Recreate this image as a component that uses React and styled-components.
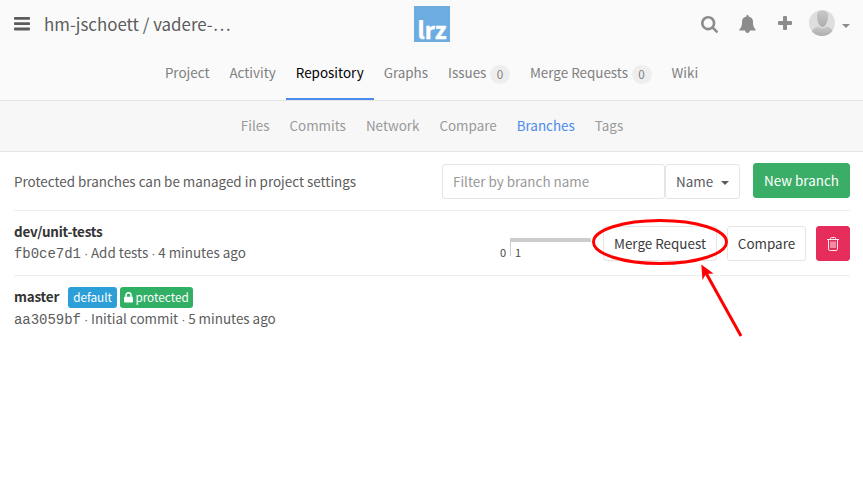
import React from "react";
import styled, { createGlobalStyle } from "styled-components";

const Global = createGlobalStyle`
  * { box-sizing: border-box; }
  body {
    margin: 0;
    background: #fff;
    color: #5c5c5c;
    font: 13.43px/20px "Noto Sans CJK SC", "Open Sans", sans-serif;
  }
`;

const Page = styled.div`
  position: relative;
  width: 863px;
  height: 482px;
  overflow: hidden;
`;

const TopArea = styled.div`
  height: 101px;
  background: #fafafa;
  border-bottom: 1px solid #e5e5e5;
`;

const Header = styled.header`
  display: grid;
  grid-template-columns: 1fr 36px 1fr;
  height: 48px;
  padding: 0 13px 0 14px;
`;

const Crumbs = styled.div`
  display: flex;
  align-items: center;
  gap: 14px;
`;

const Title = styled.h1`
  margin: 0;
  font-size: 16.9px;
  line-height: 24px;
  font-weight: 400;
  white-space: nowrap;
  color: #5c5c5c;
`;

const Logo = styled.div`
  width: 36px;
  height: 36px;
  margin-top: 6px;
  padding-top: 11px;
  background: #6dace0;
  color: #fff;
  text-align: center;
  font: 700 23px/24px "Noto Sans CJK SC", sans-serif;
  -webkit-text-stroke: 0.5px #fff;
`;

const Actions = styled.div`
  display: flex;
  align-items: center;
  justify-content: flex-end;
  svg { flex: none; }
  > svg:last-child { margin-top: 4px; }
`;

const SearchIcon = styled.svg`margin-right: 21px;`;
const BellIcon = styled.svg`margin-right: 22px;`;
const PlusIcon = styled.svg`margin: -2px 17px 0 0;`;
const Avatar = styled.svg`margin: -2px 7px 0 0;`;

const Nav = styled.nav`
  display: flex;
  justify-content: center;
  height: 52px;
`;

const NavItem = styled.a`
  display: flex;
  height: 52px;
  padding: 14px 10px 0;
  color: ${(p) => (p.$active ? "#000" : "#808080")};
  border-bottom: 2px solid ${(p) => (p.$active ? "#4a8bee" : "transparent")};
  white-space: nowrap;
`;

const Badge = styled.span`
  width: 20px;
  height: 19px;
  margin: 3px 0 0 3.5px;
  border-radius: 10px;
  background: #eee;
  color: #808080;
  font-size: 11.7px;
  line-height: 18px;
  text-align: center;
`;

const SubNav = styled.nav`
  display: flex;
  justify-content: center;
  gap: 20px;
  height: 51px;
  padding-top: 14px;
  padding-left: 1px;
  background: #f7f7f7;
  border-bottom: 1px solid #e5e5e5;
`;

const SubItem = styled.a`
  color: ${(p) => (p.$active ? "#4a8bee" : "#999")};
`;

const Content = styled.main`
  padding: 0 13px 0 14px;
`;

const Toolbar = styled.div`
  display: flex;
  align-items: flex-start;
  height: 59px;
  padding-top: 12px;
  border-bottom: 1px solid #eee;
`;

const Hint = styled.span`
  flex: 1;
  padding-top: 7px;
  white-space: nowrap;
`;

const Filter = styled.input`
  width: 223px;
  height: 35px;
  padding: 0 10px 2px;
  border: 1px solid #e5e5e5;
  border-radius: 3px;
  background: #fff;
  font: inherit;
  &::placeholder { color: #999; opacity: 1; }
`;

const SortButton = styled.button`
  display: flex;
  align-items: center;
  justify-content: space-between;
  width: 75px;
  height: 35px;
  padding: 0 10px 2px;
  border: 1px solid #e5e5e5;
  border-radius: 3px;
  background: #fff;
  color: #5c5c5c;
  font: inherit;
  svg { margin-top: 5px; }
`;

const NewButton = styled.button`
  width: 97px;
  height: 35px;
  margin: -1px 0 0 13px;
  padding: 0 0 2px;
  border: 1px solid #38ae67;
  border-radius: 3px;
  background: #3aad66;
  color: #fff;
  font: inherit;
`;

const Row = styled.section`
  display: flex;
  height: 65px;
  border-bottom: 1px solid ${(p) => (p.$last ? "transparent" : "#eee")};
`;

const Info = styled.div`
  flex: 1;
  padding-top: 11px;
  white-space: nowrap;
`;

const NameLine = styled.div`
  display: flex;
  height: 21px;
`;

const BranchName = styled.strong`
  margin-top: -1px;
  color: #333;
  font-weight: 700;
  letter-spacing: -0.2px;
`;

const Label = styled.span`
  display: flex;
  align-items: center;
  gap: 2px;
  height: 21px;
  width: ${(p) => p.$w}px;
  justify-content: center;
  margin-left: ${(p) => p.$ml}px;
  padding-bottom: 2px;
  border-radius: 3px;
  background: ${(p) => p.$bg};
  color: #fff;
  font-size: 11.75px;
  line-height: 19px;
  svg { margin-top: 1px; }
`;

const Commit = styled.div`
  height: 20px;
  margin-top: ${(p) => p.$shift || 0}px;
`;

const Sha = styled.span`
  font: 14px/20px "Liberation Mono", monospace;
  letter-spacing: -0.03px;
`;

const Dot = styled.span`
  margin-right: -0.4px;
  font: 13px/20px "Liberation Sans", sans-serif;
`;

const Divergence = styled.div`
  display: flex;
  align-items: flex-start;
  margin: 27px 12px 0 0;
  font-size: 11px;
  line-height: 16px;
  color: #4c4c4c;
`;

const Behind = styled.span`
  margin: 6px 4px 0 0;
`;

const Separator = styled.span`
  width: 1px;
  height: 18px;
  background: #ccc;
`;

const Ahead = styled.span`
  width: 80px;
  height: 18px;
  padding: 2px 0 0 4px;
  border-top: 4px solid #ccc;
  border-top-right-radius: 2px;
`;

const RowButton = styled.button`
  display: flex;
  align-items: center;
  justify-content: center;
  width: ${(p) => p.$w}px;
  height: 35px;
  margin: 15px 0 0 ${(p) => p.$ml || 0}px;
  padding: 0 0 ${(p) => (p.$danger ? 0 : 2)}px;
  border: 1px solid ${(p) => (p.$danger ? "#e52c5a" : "#e5e5e5")};
  border-radius: 3px;
  background: ${(p) => (p.$danger ? "#e52c5a" : "#fff")};
  color: #3b3b3b;
  font: inherit;
  white-space: nowrap;
`;

const Annotation = styled.svg`
  position: absolute;
  left: 585px;
  top: 210px;
`;

const Caret = ({ color = "#8c8c8c" }) => (
  <svg width="8" height="4" viewBox="0 0 8 4"><path d="M0 0h8L4 4z" fill={color} /></svg>
);

export default function App() {
  return (
    <Page>
      <Global />
      <TopArea>
        <Header>
          <Crumbs>
            <svg width="16" height="14" viewBox="0 0 16 14" fill="#5c5c5c">
              <rect y="0" width="16" height="2.8" rx=".8" />
              <rect y="5.3" width="16" height="2.8" rx=".8" />
              <rect y="10.6" width="16" height="2.8" rx=".8" />
            </svg>
            <Title>hm-jschoett / vadere-…</Title>
          </Crumbs>
          <Logo>lrz</Logo>
          <Actions>
            <SearchIcon width="17" height="17" viewBox="0 128 1664 1664" fill="#8c8c8c">
              <path d="M1152 832q0-185-131.5-316.5T704 384 387.5 515.5 256 832t131.5 316.5T704 1280t316.5-131.5T1152 832zm512 832q0 53-37.5 90.5t-90.5 37.5q-54 0-90-38l-343-342q-179 124-399 124-143 0-273.5-55.5t-225-150-150-225T0 832t55.5-273.5 150-225 225-150T704 128t273.5 55.5 225 150 150 225T1408 832q0 220-124 399l343 343q37 37 37 90z" />
            </SearchIcon>
            <BellIcon width="17" height="18" viewBox="0 0 17 18" fill="#8c8c8c">
              <path d="M8.5 0c.8 0 1.2.6 1.100 1.400 2.800.6 4.400 2.600 4.400 5 0 4.700 1 6.600 2.800 8 0 .8-.5 1.200-1.100 1.200H10.900c-.1 1.400-1.100 2.300-2.400 2.300s-2.300-.9-2.400-2.300H1.300c-.6 0-1.100-.4-1.100-1.200 1.800-1.400 2.800-3.300 2.800-8 0-2.400 1.600-4.400 4.400-5C7.300.6 7.700 0 8.500 0z" />
            </BellIcon>
            <PlusIcon width="14" height="14" viewBox="0 0 14 14" fill="#8c8c8c">
              <path d="M6 0h2q1 0 1 1v4h4q1 0 1 1v2q0 1-1 1H9v4q0 1-1 1H6q-1 0-1-1V9H1q-1 0-1-1V6q0-1 1-1h4V1q0-1 1-1z" />
            </PlusIcon>
            <Avatar width="26" height="26" viewBox="0 0 26 26">
              <defs>
                <clipPath id="round"><circle cx="13" cy="13" r="13" /></clipPath>
                <linearGradient id="skin" x1="0" y1="0" x2="0" y2="1">
                  <stop offset="0" stopColor="#c8c8c8" />
                  <stop offset="1" stopColor="#adadad" />
                </linearGradient>
              </defs>
              <g clipPath="url(#round)">
                <rect width="26" height="26" fill="#dedede" />
                <path d="M8 5c0-6 11-6 11 0 0 6-2 12-5.500 12S8 11 8 5z" fill="url(#skin)" />
                <path d="M1 26c1-5 3-7 7.500-9.500q5 3.500 10 0C23 19 25 21 26 26z" fill="url(#skin)" />
              </g>
            </Avatar>
            <Caret />
          </Actions>
        </Header>
        <Nav>
          <NavItem>Project</NavItem>
          <NavItem>Activity</NavItem>
          <NavItem $active>Repository</NavItem>
          <NavItem>Graphs</NavItem>
          <NavItem>Issues<Badge>0</Badge></NavItem>
          <NavItem>Merge Requests<Badge>0</Badge></NavItem>
          <NavItem>Wiki</NavItem>
        </Nav>
      </TopArea>
      <SubNav>
        <SubItem>Files</SubItem>
        <SubItem>Commits</SubItem>
        <SubItem>Network</SubItem>
        <SubItem>Compare</SubItem>
        <SubItem $active>Branches</SubItem>
        <SubItem>Tags</SubItem>
      </SubNav>
      <Content>
        <Toolbar>
          <Hint>Protected branches can be managed in project settings</Hint>
          <Filter placeholder="Filter by branch name" />
          <SortButton>Name <Caret color="#5c5c5c" /></SortButton>
          <NewButton>New branch</NewButton>
        </Toolbar>
        <Row>
          <Info>
            <NameLine><BranchName>dev/unit-tests</BranchName></NameLine>
            <Commit $shift={-1}><Sha>fb0ce7d1</Sha> <Dot>·</Dot> Add tests <Dot>·</Dot> 4 minutes ago</Commit>
          </Info>
          <Divergence>
            <Behind>0</Behind>
            <Separator />
            <Ahead>1</Ahead>
          </Divergence>
          <RowButton $w={114}>Merge Request</RowButton>
          <RowButton $w={79} $ml={10}>Compare</RowButton>
          <RowButton $w={34} $ml={10} $danger aria-label="Delete branch">
            <svg width="12" height="14" viewBox="0 0 12 14" fill="none" stroke="#fff">
              <path d="M0 2.500h12M3.500 2.500v-1.200q0-.8.8-.8h3.400q.8 0 .8.800v1.200M1.500 2.500v9.500q0 1.500 1.200 1.500h6.600q1.200 0 1.200-1.500V2.500M4 4.500v6.500M6 4.500v6.500M8 4.500v6.500" strokeWidth=".9" />
            </svg>
          </RowButton>
        </Row>
        <Row $last>
          <Info>
            <NameLine>
              <BranchName>master</BranchName>
              <Label $w={49} $ml={9} $bg="#2d9fd8">default</Label>
              <Label $w={73} $ml={3} $bg="#31af64">
                <svg width="9" height="11" viewBox="0 0 9 11">
                  <path d="M2 5.500V3.300a2.500 2.500 0 0 1 5 0v2.200" fill="none" stroke="#fff" strokeWidth="1.500" />
                  <rect y="4.800" width="9" height="5.800" rx=".8" fill="#fff" />
                </svg>
                protected
              </Label>
            </NameLine>
            <Commit><Sha>aa3059bf</Sha> <Dot>·</Dot> Initial commit <Dot>·</Dot> 5 minutes ago</Commit>
          </Info>
        </Row>
      </Content>
      <Annotation width="165" height="130" viewBox="585 210 165 130">
        <ellipse cx="660" cy="242" rx="66.500" ry="21.500" fill="none" stroke="#f00" strokeWidth="3" />
        <path d="M741 336L706 273" stroke="#f00" strokeWidth="3" />
        <path d="M701.300 264.500l1.200 15.500 3.500-6 7.500-.5z" fill="#f00" />
      </Annotation>
    </Page>
  );
}
